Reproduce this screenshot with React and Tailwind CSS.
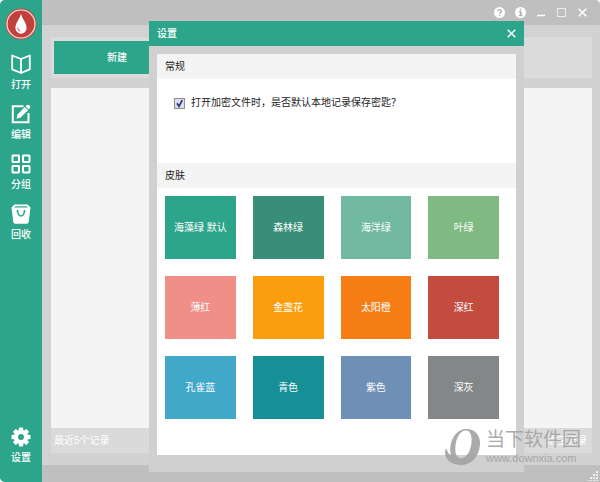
import { useState } from 'react';

const skins = [
  { name: '海藻绿 默认', color: 'bg-[#2ca58a]' },
  { name: '森林绿', color: 'bg-[#388e76]' },
  { name: '海洋绿', color: 'bg-[#72b9a1]' },
  { name: '叶绿', color: 'bg-[#7fba82]' },
  { name: '薄红', color: 'bg-[#ef8f88]' },
  { name: '金盏花', color: 'bg-[#fb9e0d]' },
  { name: '太阳橙', color: 'bg-[#f67c14]' },
  { name: '深红', color: 'bg-[#c44c3f]' },
  { name: '孔雀蓝', color: 'bg-[#42a8c9]' },
  { name: '青色', color: 'bg-[#178f96]' },
  { name: '紫色', color: 'bg-[#6e90b6]' },
  { name: '深灰', color: 'bg-[#838787]' },
];

function DropLogo() {
  return (
    <svg className="size-8 shrink-0" viewBox="0 0 32 32">
      <circle cx="16" cy="16" r="15.7" fill="#b5584f" />
      <circle cx="16" cy="16" r="14.6" fill="#f3e3df" />
      <circle cx="16" cy="16" r="13.4" fill="#c2413f" />
      <path d="M16 5.500C15.400 10.500 10.400 14.200 10.400 20a5.600 5.800 0 0 0 11.200 0C21.600 14.200 16.600 10.500 16 5.500z" fill="#fff" />
      <path d="M12.600 18.500c-.6 3 .8 5 3.400 5.300-1.500-1.200-2.700-2.800-3.400-5.300z" fill="#c2413f" />
    </svg>
  );
}

function BookIcon() {
  return (
    <svg className="size-5" viewBox="0 0 20 20" fill="none" stroke="#fff" strokeWidth="1.800" strokeLinejoin="round">
      <path d="M1.200 1.500L10 5l8.800-3.500v13.800L10 19l-8.800-3.700zM10 5v14" />
    </svg>
  );
}

function EditIcon() {
  return (
    <svg className="size-5" viewBox="0 0 20 20">
      <path d="M12.500 2.200H1.800v16h15.700V9" fill="none" stroke="#fff" strokeWidth="2" />
      <path d="M5.500 14.700l1-4.300 7.300-7.300 3.200 3.200-7.300 7.300z" fill="#fff" />
      <path d="M14.600 2.300l1-1c.9-.9 2.200-.7 3 .1s1 2 .1 2.900l-1 1.100z" fill="#fff" />
    </svg>
  );
}

function GroupIcon() {
  return (
    <svg className="size-5" viewBox="0 0 20 20" fill="none" stroke="#fff" strokeWidth="2">
      <rect x="1.500" y="1.500" width="6.500" height="6.500" rx=".4" />
      <rect x="12" y="1.500" width="6.500" height="6.500" rx=".4" />
      <rect x="1.500" y="12" width="6.500" height="6.500" rx=".4" />
      <rect x="12" y="12" width="6.500" height="6.500" rx=".4" />
    </svg>
  );
}

function RecycleIcon() {
  return (
    <svg className="size-5" viewBox="0 0 20 20">
      <path d="M3.500.5h13l3 3-1.800 14.500a2 2 0 0 1-2 1.700H4.300a2 2 0 0 1-2-1.700L.5 3.500z" fill="#fff" />
      <path d="M4.200 2.200h11.600l1 1.200H3.200z" fill="#2ca58a" />
      <path d="M6.500 7c.3 3 1.600 4.900 3.500 4.900s3.200-1.900 3.500-4.900" fill="none" stroke="#2ca58a" strokeWidth="1.500" />
      <circle cx="6.500" cy="7" r="1" fill="#2ca58a" />
      <circle cx="13.500" cy="7" r="1" fill="#2ca58a" />
    </svg>
  );
}

function GearIcon() {
  return (
    <svg className="size-5" viewBox="-10 -10 20 20">
      <g fill="#fff">
        <circle r="7.200" />
        <rect x="-2.200" y="-9.500" width="4.400" height="19" rx="1" />
        <rect x="-2.200" y="-9.500" width="4.400" height="19" rx="1" transform="rotate(45)" />
        <rect x="-2.200" y="-9.500" width="4.400" height="19" rx="1" transform="rotate(90)" />
        <rect x="-2.200" y="-9.500" width="4.400" height="19" rx="1" transform="rotate(135)" />
      </g>
      <circle r="3" fill="#2ca58a" />
    </svg>
  );
}

function CloseIcon() {
  return (
    <svg className="size-[9px]" viewBox="0 0 9 9" stroke="#fff" strokeWidth="1.500">
      <path d="M.7.7l7.600 7.600M8.300.7L.7 8.300" />
    </svg>
  );
}

function NavButton({ icon, label }) {
  return (
    <button type="button" className="flex w-full flex-col items-center gap-[5px] leading-3">
      {icon}
      <span>{label}</span>
    </button>
  );
}

function Sidebar() {
  return (
    <nav className="flex w-[42px] shrink-0 flex-col items-center bg-[#2ca58a] pt-2 pb-[18px] font-medium text-white">
      <DropLogo />
      <div className="mt-[14px] flex w-full flex-col gap-[13px]">
        <NavButton icon={<BookIcon />} label="打开" />
        <NavButton icon={<EditIcon />} label="编辑" />
        <NavButton icon={<GroupIcon />} label="分组" />
        <NavButton icon={<RecycleIcon />} label="回收" />
      </div>
      <div className="mt-auto w-full">
        <NavButton icon={<GearIcon />} label="设置" />
      </div>
    </nav>
  );
}

function TitleBar() {
  return (
    <header className="flex h-[25px] items-center justify-end gap-[10px] bg-[#bfbfbf] pr-3">
      <button type="button" aria-label="帮助">
        <svg className="size-[11px]" viewBox="0 0 11 11">
          <circle cx="5.500" cy="5.500" r="5.500" fill="#fff" />
          <path d="M3.800 4.300c0-2.300 3.500-2.200 3.500-.1 0 1.300-1.700 1.200-1.700 2.500M5.600 7.800v1.300" fill="none" stroke="#b0b0b0" strokeWidth="1.400" />
        </svg>
      </button>
      <button type="button" aria-label="关于">
        <svg className="size-[11px]" viewBox="0 0 11 11">
          <circle cx="5.500" cy="5.500" r="5.500" fill="#fff" />
          <path d="M5.500 1.800v1.500M4 4.700h1.800v3.800M3.900 8.600h3.500" fill="none" stroke="#b0b0b0" strokeWidth="1.500" />
        </svg>
      </button>
      <button type="button" aria-label="最小化">
        <svg className="h-[9px] w-[10px]" viewBox="0 0 10 9">
          <path d="M1 7.500h8" stroke="#fff" strokeWidth="1.600" />
        </svg>
      </button>
      <button type="button" aria-label="最大化">
        <svg className="h-[9px] w-[11px]" viewBox="0 0 11 9">
          <rect x="1.500" y=".5" width="8" height="8" fill="none" stroke="#ececec" />
        </svg>
      </button>
      <button type="button" aria-label="关闭" className="flex w-[11px] justify-center">
        <CloseIcon />
      </button>
    </header>
  );
}

function SettingsDialog() {
  const [remember, setRemember] = useState(true);

  return (
    <section
      role="dialog"
      aria-label="设置"
      className="absolute top-[21px] right-[76px] bottom-[10px] left-[149px] flex flex-col bg-[#d0d0d0]"
    >
      <div className="flex h-[25px] shrink-0 items-center justify-between bg-[#2ca58a] px-2 font-medium text-white">
        <h1>设置</h1>
        <button type="button" aria-label="关闭设置">
          <CloseIcon />
        </button>
      </div>
      <div className="mx-2 mt-2 mb-[17px] flex-1 bg-white">
        <h2 className="bg-[#f4f4f4] px-2 leading-[26px] h-[25px]">常规</h2>
        <div className="h-[84px] px-4 pt-[15px]">
          <label className="flex items-center gap-[6px] leading-[18px]">
            <span className="relative ml-[1px] size-[11px]">
              <input
                type="checkbox"
                checked={remember}
                onChange={(e) => setRemember(e.target.checked)}
                className="block size-[11px] appearance-none border border-[#8e8f8f] bg-[#dcdfe8]"
              />
              {remember && (
                <svg className="pointer-events-none absolute inset-0 size-[11px]" viewBox="0 0 11 11">
                  <path d="M3 5.300l2 3L8.300 2.200" fill="none" stroke="#2c2f8f" strokeWidth="1.700" />
                </svg>
              )}
            </span>
            打开加密文件时，是否默认本地记录保存密匙？
          </label>
        </div>
        <h2 className="bg-[#f4f4f4] px-2 leading-[26px] h-[25px]">皮肤</h2>
        <div className="grid grid-cols-4 gap-x-[17px] gap-y-[17px] pt-2 pr-[17px] pl-2">
          {skins.map((skin) => (
            <button key={skin.name} type="button" className={`h-[63px] text-white ${skin.color}`}>
              {skin.name}
            </button>
          ))}
        </div>
      </div>
    </section>
  );
}

function Watermark() {
  return (
    <div className="pointer-events-none absolute right-[19px] bottom-4 flex items-center gap-[5px] text-[#a3a3a3] opacity-90">
      <svg className="h-[38px] w-9" viewBox="0 0 36 38">
        <path
          fillRule="evenodd"
          d="M20 1C29 0 36 7 35 17 34 29 26 37 16 37 7 37 0 32 0 24c0-2 1-3 2-3 0 3 1.500 5 4 6C3 15 10 2 20 1zM20 2.500C12 4 9 18 11 26c2 7 9 5 13-2C28 16 28 1 20 2.500z"
          fill="currentColor"
        />
      </svg>
      <div>
        <div className="text-[19px] leading-[22px]">当下软件园</div>
        <div className="text-[11px] leading-[14px]">www.downxia.com</div>
      </div>
    </div>
  );
}

export default function App() {
  return (
    <div className="relative flex min-h-screen overflow-hidden rounded-t-[5px] rounded-bl-[5px] bg-[#bfbfbf] font-['Liberation_Sans','Noto_Sans_CJK_SC',sans-serif] text-[10px] text-[#222]">
      <Sidebar />
      <div className="flex flex-1 flex-col">
        <TitleBar />
        <main className="flex flex-1 flex-col bg-[#d2d2d2] pt-3 pr-2 pb-3 pl-[9px] text-white">
          <div className="bg-[#dbdbdb] px-[3px] py-1">
            <button type="button" className="block h-[33px] w-[126px] bg-[#2ca58a] font-medium">
              新建
            </button>
          </div>
          <div className="mt-[10px] flex-1 bg-[#f4f4f4]"></div>
          <div className="flex h-[25px] items-center justify-between bg-[#dadada] pr-[5px] pl-[3px]">
            <span>最近5个记录</span>
            <button type="button">清空记录</button>
          </div>
        </main>
        <footer className="flex h-[17px] items-end justify-end bg-[#bfbfbf]">
          <svg className="size-3" viewBox="0 0 12 12" fill="#e8edf5">
            <path d="M8 1h2v2H8zM5 4h2v2H5zM8 4h2v2H8zM2 7h2v2H2zM5 7h2v2H5zM8 7h2v2H8zM0 10h1v1H0zM2 10h2v1H2zM5 10h2v1H5zM8 10h2v1H8z" />
          </svg>
        </footer>
      </div>
      <SettingsDialog />
      <Watermark />
    </div>
  );
}
